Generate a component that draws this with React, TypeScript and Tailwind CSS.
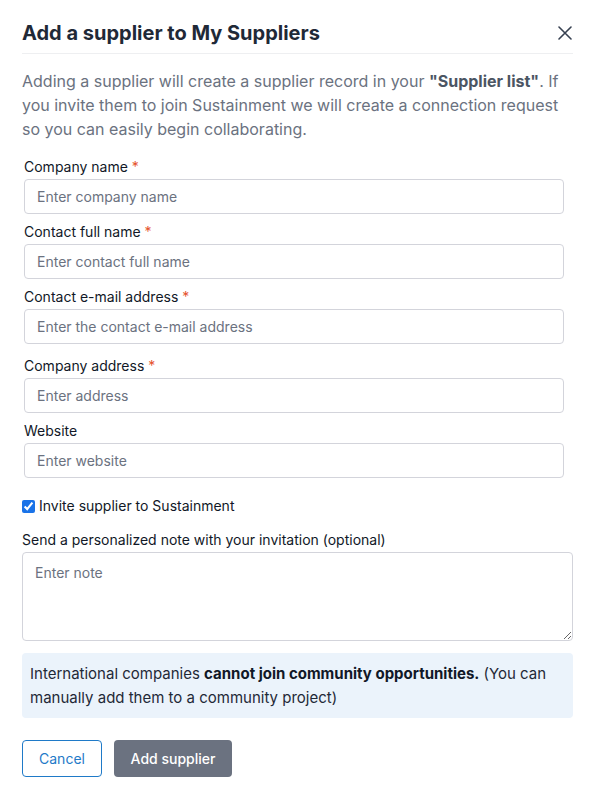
import React, { useState } from 'react';

const Field: React.FC<{
  label: string;
  placeholder: string;
  required?: boolean;
  className?: string;
}> = ({ label, placeholder, required, className = '' }) => (
  <div className={className}>
    <label className="block text-sm leading-5 text-[#111827] mb-[2px]">
      {label}
      {required && <span className="text-[#e5532d]"> *</span>}
    </label>
    <input
      type="text"
      placeholder={placeholder}
      className="block w-full h-[35px] rounded border border-[#d3d4db] bg-white px-3 text-sm text-[#111827] placeholder:text-[#6b7280] focus:outline-none"
    />
  </div>
);

export default function App() {
  const [invite, setInvite] = useState(true);

  return (
    <div
      className="bg-white w-[593px] min-h-[796px] pl-[22px] pr-[20px] pt-[19px] pb-[19px]"
      style={{ fontFamily: 'Inter, "Noto Sans", sans-serif' }}
    >
      {/* Header */}
      <div className="flex items-center justify-between border-b border-[#eeeff1] pb-[6px]">
        <h2 className="text-[20px] leading-7 font-bold text-[#1f2937]">Add a supplier to My Suppliers</h2>
        <button className="mr-[1px] text-[#374151]">
          <svg width="14" height="14" viewBox="0 0 14 14" fill="none" stroke="currentColor" strokeWidth="1.6" strokeLinecap="round">
            <path d="M1 1l12 12M13 1L1 13" />
          </svg>
        </button>
      </div>

      <p className="mt-[15px] text-base leading-6 text-[#6b7280]">
        Adding a supplier will create a supplier record in your{' '}
        <span className="font-bold text-[#4b5563]">"Supplier list"</span>. If you invite them to join Sustainment we will
        create a connection request so you can easily begin collaborating.
      </p>

      {/* Fields */}
      <div className="mt-4 ml-[2px] mr-[9px]">
        <Field label="Company name" placeholder="Enter company name" required />
        <Field label="Contact full name" placeholder="Enter contact full name" required className="mt-2" />
        <Field label="Contact e-mail address" placeholder="Enter the contact e-mail address" required className="mt-2" />
        <Field label="Company address" placeholder="Enter address" required className="mt-3" />
        <Field label="Website" placeholder="Enter website" className="mt-2" />
      </div>

      <label className="mt-[18px] flex items-center h-5 text-sm text-[#111827]">
        <input
          type="checkbox"
          checked={invite}
          onChange={e => setInvite(e.target.checked)}
          className="m-0 mr-1 w-[13px] h-[13px] accent-[#1a73e8]"
        />
        Invite supplier to Sustainment
      </label>

      <div className="mt-[14px]">
        <label className="block text-sm leading-5 text-[#111827] mb-[2px]">
          Send a personalized note with your invitation (optional)
        </label>
        <textarea
          placeholder="Enter note"
          className="block w-full h-[89px] rounded border border-[#d3d4db] px-3 pt-[10px] text-sm leading-5 placeholder:text-[#6b7280] focus:outline-none"
        />
      </div>

      <div className="mt-3 rounded bg-[#ebf3fb] px-2 pt-[9px] pb-2 text-[15px] leading-6 text-[#1f2937]">
        International companies <span className="font-bold text-[#111827]">cannot join community opportunities.</span> (You can
        manually add them to a community project)
      </div>

      {/* Footer */}
      <div className="mt-[22px] flex gap-3">
        <button className="h-[37px] w-[80px] rounded border border-[#1f7ac8] text-sm text-[#1f7ac8] bg-white">
          Cancel
        </button>
        <button className="h-[37px] w-[118px] rounded bg-[#6b7280] text-sm font-medium text-white">
          Add supplier
        </button>
      </div>
    </div>
  );
}
